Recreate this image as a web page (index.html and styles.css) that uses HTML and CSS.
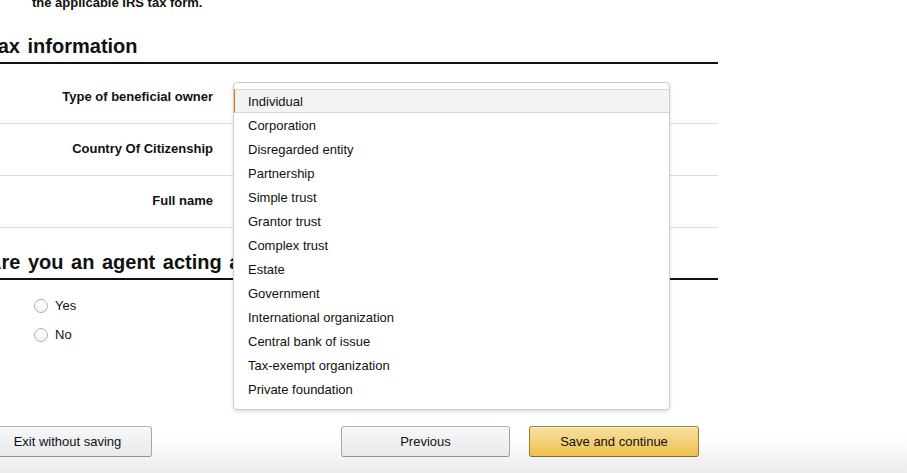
FILE: index.html
```html
<!DOCTYPE html>
<html lang="en">
<head>
<meta charset="utf-8">
<title>Tax information</title>
<link rel="stylesheet" href="styles.css">
</head>
<body>
<div class="page">
  <p class="intro">the applicable IRS tax form.</p>

  <section class="form">
    <h2 class="section-title first">Tax information</h2>
    <div class="row">
      <div class="label">Type of beneficial owner</div>
      <div class="control"></div>
    </div>
    <div class="row">
      <div class="label">Country Of Citizenship</div>
      <div class="control"></div>
    </div>
    <div class="row">
      <div class="label">Full name</div>
      <div class="control"></div>
    </div>

    <h2 class="section-title second">Are you an agent acting as an intermediary?</h2>
    <div class="radios">
      <label class="radio-item"><input type="radio" name="agent" class="radio"><span>Yes</span></label>
      <label class="radio-item"><input type="radio" name="agent" class="radio"><span>No</span></label>
    </div>
  </section>

  <div class="actions">
    <button class="btn">Exit without saving</button>
    <div class="actions-right">
      <button class="btn">Previous</button>
      <button class="btn btn-primary">Save and continue</button>
    </div>
  </div>
</div>

<ul class="dropdown">
  <li class="option active">Individual</li>
  <li class="option">Corporation</li>
  <li class="option">Disregarded entity</li>
  <li class="option">Partnership</li>
  <li class="option">Simple trust</li>
  <li class="option">Grantor trust</li>
  <li class="option">Complex trust</li>
  <li class="option">Estate</li>
  <li class="option">Government</li>
  <li class="option">International organization</li>
  <li class="option">Central bank of issue</li>
  <li class="option">Tax-exempt organization</li>
  <li class="option">Private foundation</li>
</ul>
</body>
</html>
```

FILE: styles.css
```css
html, body {
  margin: 0;
  padding: 0;
  height: 100%;
  overflow: hidden;
}

html {
  background: linear-gradient(to bottom, #ffffff 0, #ffffff 436px, #ebebeb 473px);
}

body {
  font-family: "Liberation Sans", Arial, sans-serif;
  font-size: 13px;
  line-height: 19px;
  color: #111;
  position: relative;
}

.page {
  margin-left: -13px;
  width: 731px;
}

.intro {
  margin: -7px 0 0 45px;
  font-weight: bold;
  font-size: 13px;
  line-height: 19px;
}

.section-title {
  margin: 0;
  font-size: 20px;
  line-height: 24px;
  font-weight: bold;
  word-spacing: 2px;
  color: #111;
  padding-bottom: 4px;
  border-bottom: 2px solid #111;
  white-space: nowrap;
  overflow: hidden;
}

.section-title.first {
  margin-top: 22px;
  margin-bottom: 8px;
}

.section-title.second {
  margin-top: 22px;
}

.row {
  display: grid;
  grid-template-columns: 226px 1fr;
  column-gap: 20px;
  align-items: center;
  height: 49px;
  padding-bottom: 2px;
  border-bottom: 1px solid #ddd;
}

.label {
  text-align: right;
  font-weight: bold;
}

.radios {
  display: flex;
  flex-direction: column;
  gap: 10px;
  margin-top: 16px;
  padding-left: 47px;
}

.radio-item {
  display: flex;
  align-items: center;
  gap: 7px;
  height: 19px;
}

.radio {
  appearance: none;
  -webkit-appearance: none;
  margin: 0;
  width: 14px;
  height: 14px;
  border: 1px solid #b0b0b0;
  border-radius: 50%;
  background: linear-gradient(to bottom, #ffffff, #f3f3f3);
  box-sizing: border-box;
}

.actions {
  display: flex;
  justify-content: space-between;
  margin-top: 82px;
  margin-left: -4px;
  width: 716px;
}

.actions-right {
  display: flex;
  gap: 19px;
}

.btn {
  width: 169px;
  height: 31px;
  box-sizing: border-box;
  border: 1px solid;
  border-color: #adb1b8 #a2a6ac #8d9096;
  border-radius: 3px;
  background: linear-gradient(to bottom, #f7f8fa, #e7e9ec);
  font-family: "Liberation Sans", Arial, sans-serif;
  font-size: 13px;
  color: #111;
  padding: 0;
  box-shadow: 0 1px 0 rgba(255, 255, 255, 0.6) inset;
}

.btn-primary {
  width: 170px;
  border-color: #a88734 #9c7e31 #846a29;
  background: linear-gradient(to bottom, #f7dfa5, #f0c14b);
}

.dropdown {
  position: absolute;
  left: 233px;
  top: 82px;
  width: 437px;
  box-sizing: border-box;
  margin: 0;
  padding: 6px 0 8px;
  list-style: none;
  background: #fff;
  border: 1px solid #cdcdcd;
  border-radius: 4px;
  box-shadow: 0 2px 4px rgba(0, 0, 0, 0.13);
}

.option {
  height: 23px;
  padding-top: 1px;
  line-height: 24px;
  padding-left: 13px;
  border-left: 1px solid transparent;
  font-size: 13px;
  color: #111;
}

.option.active {
  box-sizing: border-box;
  height: 24px;
  line-height: 22px;
  background: #f3f3f3;
  border-top: 1px solid #d5d5d5;
  border-bottom: 1px solid #d5d5d5;
  border-left: 1px solid #e77600;
}
```
